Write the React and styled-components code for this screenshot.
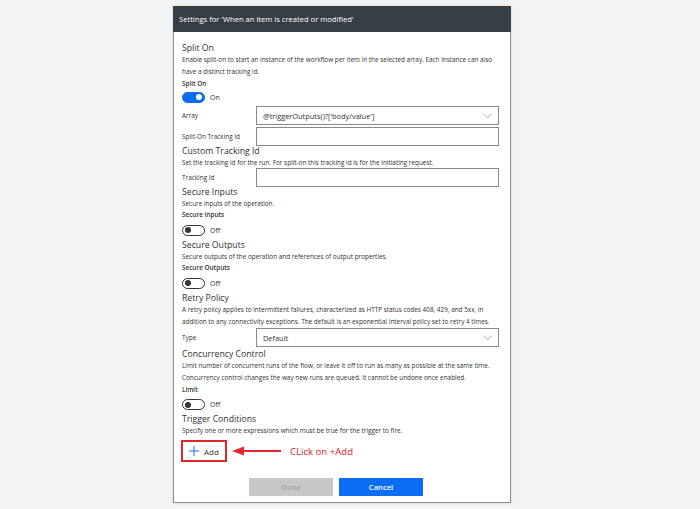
import React from "react";
import styled, { createGlobalStyle } from "styled-components";

const Global = createGlobalStyle`
  html, body { margin: 0; padding: 0; background: #f3f3f3; }
  body { font-family: "Open Sans", "Noto Sans", sans-serif; color: #323130; }
  * { box-sizing: border-box; }
`;

const Page = styled.div`
  width: 700px;
  height: 509px;
  display: flex;
  justify-content: flex-start;
  padding-top: 6px;
  padding-left: 173px;
`;

const Panel = styled.div`
  width: 338px;
  height: 497px;
  background: #fff;
  border: 1px solid #8c8c8c;
  border-top: none;
  box-shadow: 0 0 3px rgba(0,0,0,0.12);
  display: flex;
  flex-direction: column;
`;

const Header = styled.div`
  height: 26px;
  background: #363d43;
  color: #fff;
  font-size: 7.6px;
  display: flex;
  align-items: center;
  padding-left: 6px;
  margin: 0 -1px;
`;

const Body = styled.div`
  padding: 11px 11px 0 8px;
  display: flex;
  flex-direction: column;
`;

const Title = styled.div`
  font-size: 8.7px;
  line-height: 11px;
  margin-top: ${p => p.$mt || 0}px;
`;

const Desc = styled.div`
  font-size: 6.4px;
  line-height: ${p => p.$lh || 11}px;
`;

const FieldLabel = styled.div`
  font-size: 6.4px;
  font-weight: 600;
  line-height: 11px;
`;

const ToggleRow = styled.div`
  height: ${p => p.$h || 20}px;
  display: flex;
  align-items: center;
  gap: 5px;
  font-size: 7px;
`;

const Track = styled.div`
  width: 23px;
  height: 11px;
  border-radius: 6px;
  position: relative;
  background: ${p => (p.$on ? "#0b6cf4" : "#fff")};
  border: 1px solid ${p => (p.$on ? "#0b6cf4" : "#333")};
`;

const Knob = styled.div`
  position: absolute;
  top: 1.5px;
  width: 6px;
  height: 6px;
  border-radius: 50%;
  background: ${p => (p.$on ? "#fff" : "#333")};
  left: ${p => (p.$on ? "13px" : "2px")};
`;

const FormRow = styled.div`
  display: grid;
  grid-template-columns: 74px 1fr;
  align-items: center;
  height: 19px;
  margin-top: ${p => p.$mt || 0}px;
  margin-bottom: ${p => p.$mb || 0}px;
  font-size: 6.4px;
`;

const Field = styled.div`
  height: 19px;
  border: 1px solid #8a8886;
  display: flex;
  align-items: center;
  justify-content: space-between;
  padding: 0 6px;
  font-size: 7.4px;
  color: #323130;
`;

const Chevron = () => (
  <svg width="9" height="6" viewBox="0 0 9 6">
    <path d="M0.5 0.8 L4.5 4.8 L8.5 0.8" fill="none" stroke="#a6a6a6" strokeWidth="0.9" />
  </svg>
);

const Toggle = ({ on, h }) => (
  <ToggleRow $h={h}>
    <Track $on={on}><Knob $on={on} /></Track>
    <span>{on ? "On" : "Off"}</span>
  </ToggleRow>
);

const AddRow = styled.div`
  display: flex;
  align-items: center;
  margin-top: 4px;
`;

const AddButton = styled.div`
  width: 46px;
  height: 22px;
  border: 2px solid #e0262d;
  display: flex;
  align-items: center;
  padding-left: 6px;
  gap: 5px;
  font-size: 8px;
  margin-left: -1px;
`;

const Note = styled.span`
  color: #d6202e;
  font-size: 9.6px;
  margin-left: 9px;
`;

const Arrow = () => (
  <svg width="49" height="10" viewBox="0 0 49 10" style={{ marginLeft: 5 }}>
    <polygon points="0,5 12,0.5 12,9.5" fill="#e0262d" />
    <line x1="10" y1="5" x2="49" y2="5" stroke="#e0262d" strokeWidth="2" />
  </svg>
);

const Plus = () => (
  <svg width="10" height="10" viewBox="0 0 10 10">
    <path d="M5 0 V10 M0 5 H10" stroke="#0b6cf4" strokeWidth="1" />
  </svg>
);

const Footer = styled.div`
  display: flex;
  justify-content: flex-start;
  gap: 6px;
  margin-top: 16px;
  padding-left: 67px;
`;

const Btn = styled.div`
  width: 84px;
  height: 18px;
  display: flex;
  align-items: center;
  justify-content: center;
  font-size: 7.6px;
  font-weight: 600;
  background: ${p => (p.$primary ? "#0b6cf4" : "#c8c8c8")};
  color: ${p => (p.$primary ? "#fff" : "#a3a3a3")};
`;

export default function App() {
  return (
    <>
      <Global />
      <Page>
        <Panel>
          <Header>Settings for 'When an item is created or modified'</Header>
          <Body>
            <Title>Split On</Title>
            <Desc $lh={12}>
              Enable split-on to start an instance of the workflow per item in the selected array. Each instance can also have a distinct tracking id.
            </Desc>
            <FieldLabel>Split On</FieldLabel>
            <Toggle on h={16} />
            <FormRow $mt={1} $mb={2}>
              <span>Array</span>
              <Field>@triggerOutputs()?['body/value']<Chevron /></Field>
            </FormRow>
            <FormRow>
              <span>Split-On Tracking Id</span>
              <Field />
            </FormRow>
            <Title>Custom Tracking Id</Title>
            <Desc>Set the tracking id for the run. For split-on this tracking id is for the initiating request.</Desc>
            <FormRow>
              <span>Tracking Id</span>
              <Field />
            </FormRow>
            <Title>Secure Inputs</Title>
            <Desc>Secure inputs of the operation.</Desc>
            <FieldLabel>Secure Inputs</FieldLabel>
            <Toggle on={false} />
            <Title>Secure Outputs</Title>
            <Desc>Secure outputs of the operation and references of output properties.</Desc>
            <FieldLabel>Secure Outputs</FieldLabel>
            <Toggle on={false} />
            <Title>Retry Policy</Title>
            <Desc $lh={12}>
              A retry policy applies to intermittent failures, characterized as HTTP status codes 408, 429, and 5xx, in addition to any connectivity exceptions. The default is an exponential interval policy set to retry 4 times.
            </Desc>
            <FormRow>
              <span>Type</span>
              <Field>Default<Chevron /></Field>
            </FormRow>
            <Title $mt={2}>Concurrency Control</Title>
            <Desc $lh={12}>
              Limit number of concurrent runs of the flow, or leave it off to run as many as possible at the same time. Concurrency control changes the way new runs are queued. It cannot be undone once enabled.
            </Desc>
            <FieldLabel>Limit</FieldLabel>
            <Toggle on={false} h={19} />
            <Title>Trigger Conditions</Title>
            <Desc>Specify one or more expressions which must be true for the trigger to fire.</Desc>
            <AddRow>
              <AddButton><Plus />Add</AddButton>
              <Arrow />
              <Note>CLick on +Add</Note>
            </AddRow>
            <Footer>
              <Btn>Done</Btn>
              <Btn $primary>Cancel</Btn>
            </Footer>
          </Body>
        </Panel>
      </Page>
    </>
  );
}
